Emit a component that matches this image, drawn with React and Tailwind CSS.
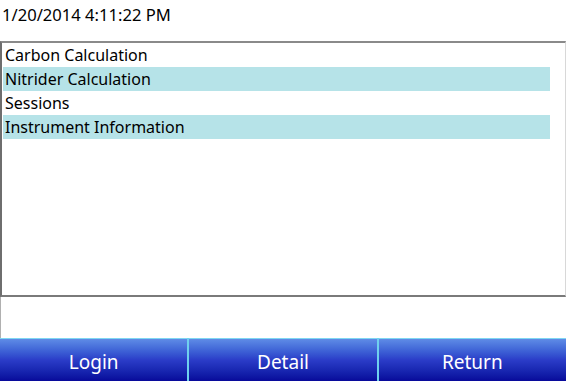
import React from "react";

const items = [
  { label: "Carbon Calculation", on: false },
  { label: "Nitrider Calculation", on: true },
  { label: "Sessions", on: false },
  { label: "Instrument Information", on: true },
];

const buttons = ["Login", "Detail", "Return"];

const App = () => {
  return (
    <div
      className="w-[566px] h-[381px] bg-white flex flex-col overflow-hidden text-black"
      style={{ fontFamily: "Tahoma, 'Noto Sans', 'DejaVu Sans', sans-serif" }}
    >
      {/* date header */}
      <div className="h-[41px] shrink-0 pl-[2px] pt-[5px] text-[16.6px] leading-[20px]">
        1/20/2014 4:11:22 PM
      </div>

      {/* list box */}
      <div className="h-[256px] shrink-0 border-t-2 border-b-2 border-l-2 border-r border-t-[#8a8a8a] border-b-[#7a7a7a] border-l-[#6e6e6e] border-r-[#d8d8d8] pl-[1px] pr-[15px]">
        {items.map((it) => (
          <div
            key={it.label}
            className={`h-[24px] pl-[2px] text-[16px] leading-[24px] ${it.on ? "bg-[#b6e3e8]" : ""}`}
          >
            {it.label}
          </div>
        ))}
      </div>

      {/* spacer */}
      <div className="h-[41px] shrink-0 border-l border-[#b0b0b0]" />

      {/* bottom buttons */}
      <div className="flex-1 flex gap-[2px] bg-[#6fd0ee]">
        {buttons.map((b) => (
          <div
            key={b}
            className="flex-1 flex items-center justify-center border-t border-[#7fd6f2] bg-gradient-to-b from-[#5f8ce6] via-[#2b3cc8] to-[#08089a] text-white text-[19px] pt-[4px]"
          >
            {b}
          </div>
        ))}
      </div>
    </div>
  );
};

export default App;
